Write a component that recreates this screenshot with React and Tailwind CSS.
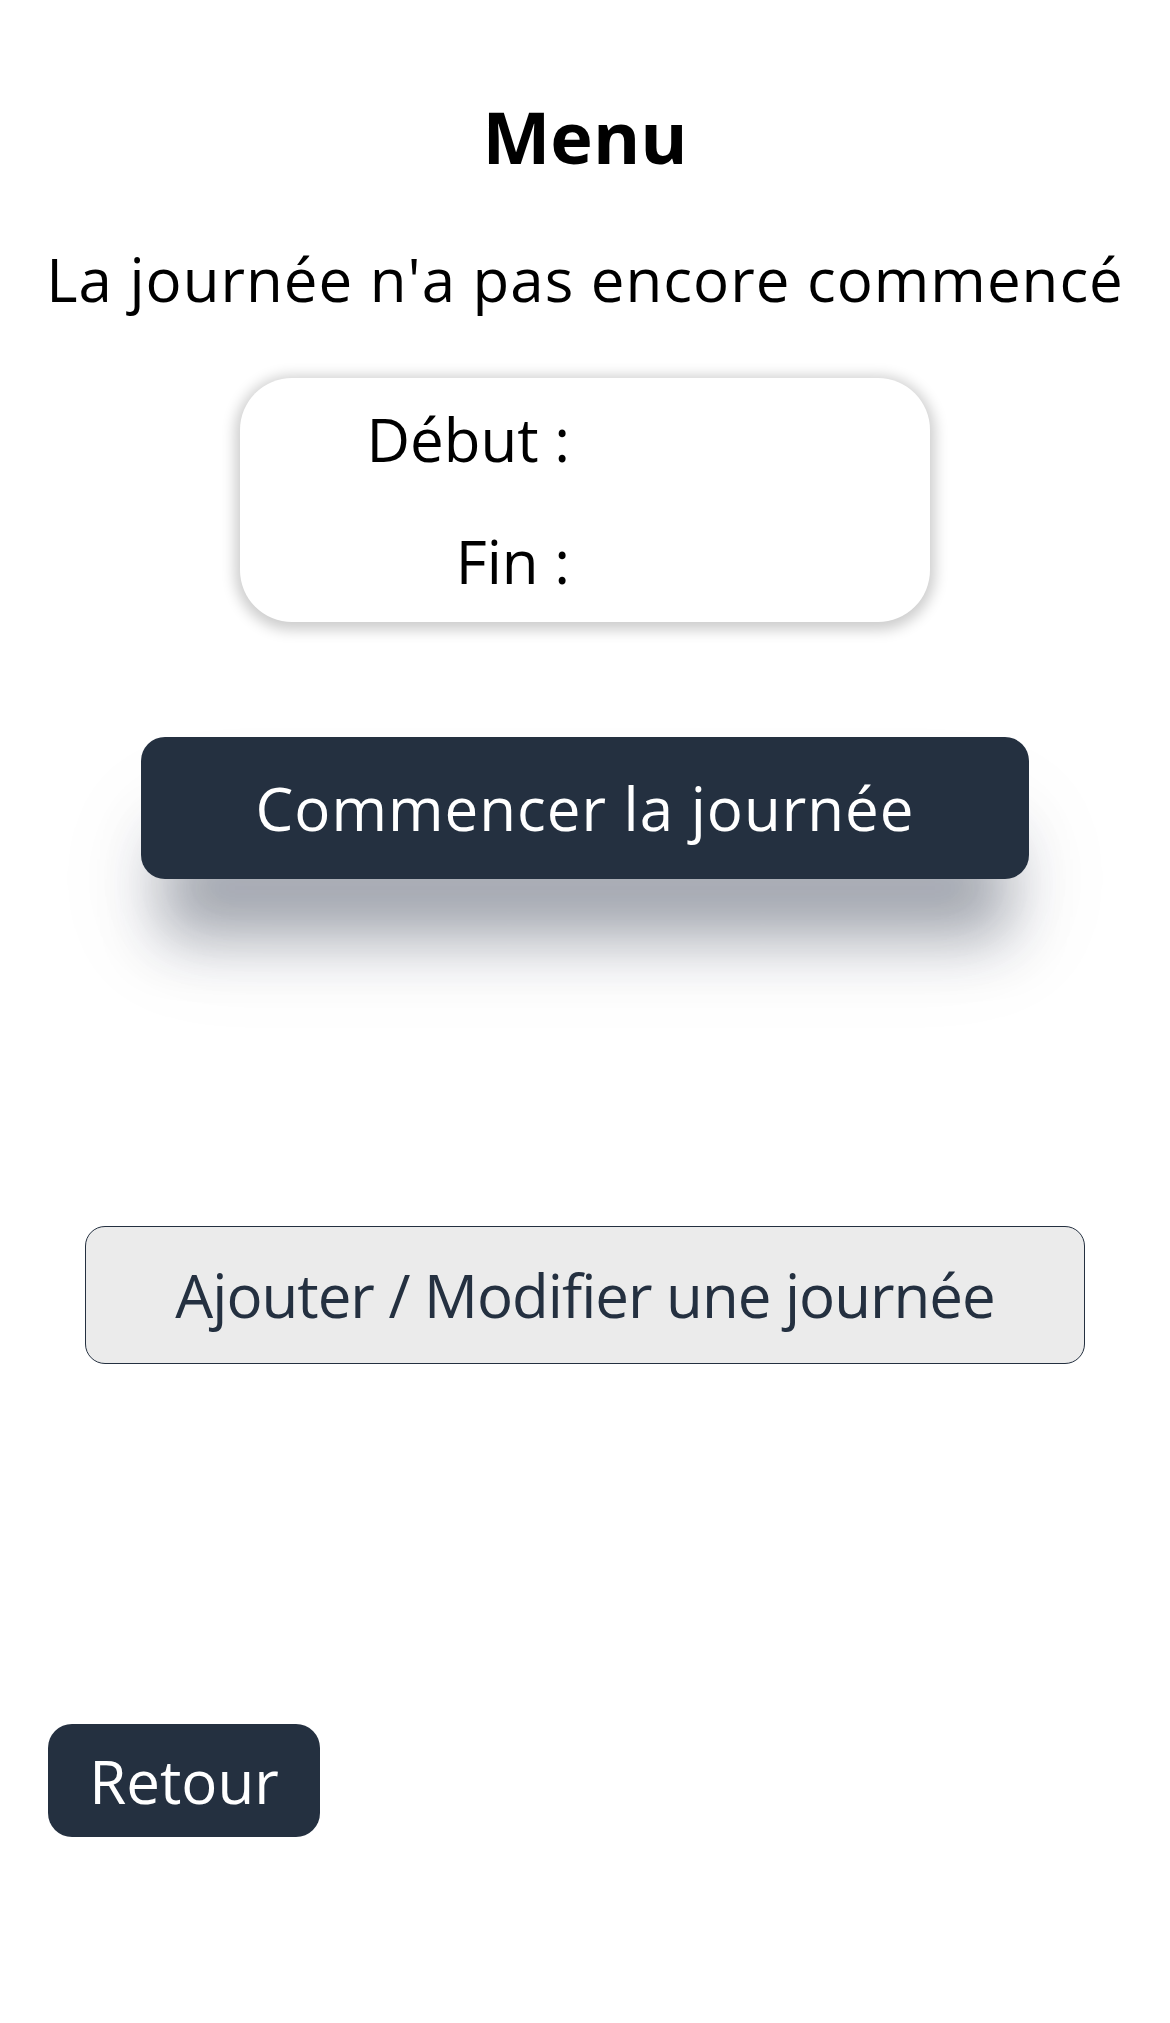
export default function App() {
  const font = { fontFamily: '"Open Sans", "Noto Sans", sans-serif' };
  return (
    <div className="w-[1170px] min-h-[2023px] bg-white flex flex-col text-black" style={font}>
      <h1 className="pt-[100px] text-center text-[72px] leading-[72px] font-bold">Menu</h1>
      <p className="mt-[71px] text-center text-[60px] leading-[72px] tracking-[1px] whitespace-nowrap">La journée n'a pas encore commencé</p>
      <div className="mt-[63px] self-center w-[690px] h-[244px] rounded-[52px] bg-white shadow-[0_3px_14px_5px_rgba(0,0,0,0.2)] py-[25px] flex flex-col gap-[50px]">
        <div className="grid grid-cols-2 gap-[30px] text-[60px] leading-[72px]">
          <span className="text-right">Début :</span>
          <span></span>
        </div>
        <div className="grid grid-cols-2 gap-[30px] text-[60px] leading-[72px]">
          <span className="text-right">Fin :</span>
          <span></span>
        </div>
      </div>
      <button className="mt-[115px] self-center w-[888px] h-[142px] rounded-[24px] bg-[#243040] text-white text-[60px] leading-[72px] tracking-[1px] shadow-[0_80px_60px_-22px_rgba(30,40,60,0.38),0_70px_110px_0_rgba(30,40,60,0.06)]">
        Commencer la journée
      </button>
      <button className="mt-[347px] self-center w-[1000px] h-[138px] rounded-[20px] bg-[#ebebeb] border border-[#243040] text-[#243040] text-[60px] leading-[72px] tracking-[-1px]">
        Ajouter / Modifier une journée
      </button>
      <button className="mt-[360px] ml-[48px] self-start w-[272px] h-[113px] rounded-[24px] bg-[#243040] text-white text-[60px] leading-[72px]">
        Retour
      </button>
    </div>
  );
}
